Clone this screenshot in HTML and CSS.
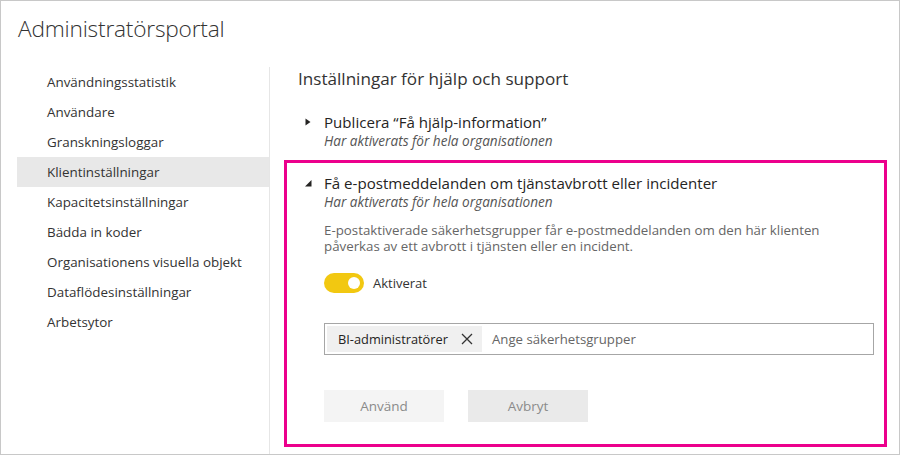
FILE: index.html
```html
<!DOCTYPE html>
<html lang="sv">
<head>
<meta charset="utf-8">
<title>Administratörsportal</title>
<link rel="stylesheet" href="styles.css">
</head>
<body>
<div class="frame">
  <header class="header">
    <h1 class="title">Administratörsportal</h1>
  </header>
  <div class="layout">
    <nav class="sidebar">
      <div class="nav-item">Användningsstatistik</div>
      <div class="nav-item">Användare</div>
      <div class="nav-item">Granskningsloggar</div>
      <div class="nav-item selected">Klientinställningar</div>
      <div class="nav-item">Kapacitetsinställningar</div>
      <div class="nav-item">Bädda in koder</div>
      <div class="nav-item">Organisationens visuella objekt</div>
      <div class="nav-item">Dataflödesinställningar</div>
      <div class="nav-item">Arbetsytor</div>
    </nav>
    <main class="main">
      <h2 class="heading">Inställningar för hjälp och support</h2>
      <section class="setting">
        <div class="setting-head">
          <svg class="caret" width="7" height="8" viewBox="0 0 7 8"><path d="M0.5 0.5 L5.5 4 L0.5 7.5 Z" fill="#252423"/></svg>
          <span class="setting-title">Publicera “Få hjälp-information”</span>
        </div>
        <div class="setting-sub">Har aktiverats för hela organisationen</div>
      </section>
      <section class="setting open">
        <div class="setting-head">
          <svg class="caret" width="7" height="8" viewBox="0 0 7 8"><path d="M6.5 1 L6.5 7.5 L0 7.5 Z" fill="#252423"/></svg>
          <span class="setting-title">Få e-postmeddelanden om tjänstavbrott eller incidenter</span>
        </div>
        <div class="setting-sub">Har aktiverats för hela organisationen</div>
        <div class="setting-body">
          <p class="desc">E-postaktiverade säkerhetsgrupper får e-postmeddelanden om den här klienten påverkas av ett avbrott i tjänsten eller en incident.</p>
          <div class="toggle-row">
            <span class="toggle"><span class="knob"></span></span>
            <span class="toggle-label">Aktiverat</span>
          </div>
          <div class="picker">
            <span class="chip">BI-administratörer
              <svg class="chip-x" width="12" height="12" viewBox="0 0 12 12"><path d="M1 1 L11 11 M11 1 L1 11" stroke="#333" stroke-width="1.3" fill="none"/></svg>
            </span>
            <span class="placeholder">Ange säkerhetsgrupper</span>
          </div>
          <div class="actions">
            <button class="btn apply">Använd</button>
            <button class="btn cancel">Avbryt</button>
          </div>
        </div>
      </section>
    </main>
  </div>
</div>
</body>
</html>
```
FILE: styles.css
```css
* { box-sizing: border-box; }
html, body { margin: 0; padding: 0; background: #fff; }
body { font-family: "Open Sans", "Noto Sans", sans-serif; color: #252423; }

.frame {
  width: 900px;
  height: 455px;
  border: 1px solid #c8c8c8;
  display: flex;
  flex-direction: column;
  overflow: hidden;
}

.header { height: 66px; padding-left: 17px; flex: none; }
.title {
  margin: 0;
  padding-top: 12px;
  font-size: 22.7px;
  font-weight: 300;
  line-height: 32px;
  color: #333;
  letter-spacing: -0.2px;
}

.layout { display: flex; flex: 1; }

.sidebar {
  margin-left: 16px;
  width: 253px;
  border-right: 1px solid #e6e6e6;
  flex: none;
}
.nav-item {
  height: 30px;
  line-height: 30px;
  padding-left: 30px;
  font-size: 13.4px;
  color: #333;
}
.nav-item.selected { background: #e8e8e8; }

.main { padding-left: 14px; flex: 1; }

.heading {
  margin: 1px 0 9px 14px;
  font-size: 17.1px;
  font-weight: 400;
  line-height: 22px;
  color: #333;
}

.setting {
  width: 603px;
  border: 3px solid transparent;
  padding: 9px 0 8px 18px;
}
.setting.open { border-color: #ec008c; padding-bottom: 22px; }

.setting-head { display: flex; align-items: center; height: 22px; }
.caret { flex: none; margin-right: 12px; }
.setting-title { font-size: 15.1px; line-height: 22px; color: #252423; }
.setting-sub {
  padding-left: 19px;
  font-size: 13.6px;
  font-style: italic;
  line-height: 16px;
  color: #555;
}

.setting-body { padding-left: 19px; }
.desc {
  margin: 12px 0 0;
  width: 500px;
  font-size: 13.3px;
  line-height: 16px;
  color: #666;
}

.toggle-row { display: flex; align-items: center; margin-top: 19px; height: 20px; }
.toggle {
  width: 40px;
  height: 20px;
  border-radius: 10px;
  background: #f2c811;
  display: flex;
  align-items: center;
  justify-content: flex-end;
  padding-right: 4px;
}
.knob { width: 12px; height: 12px; border-radius: 50%; background: #fff; }
.toggle-label { margin-left: 9px; font-size: 13px; color: #333; }

.picker {
  margin-top: 30px;
  width: 550px;
  height: 32px;
  border: 1px solid #a6a6a6;
  display: flex;
  align-items: center;
  padding-left: 2px;
}
.chip {
  height: 26px;
  background: #f0f0f0;
  display: flex;
  align-items: center;
  padding: 0 9px 0 11px;
  font-size: 12.8px;
  color: #252423;
}
.chip-x { margin-left: 13px; }
.placeholder { margin-left: 10px; font-size: 13.2px; color: #666; }

.actions { display: flex; gap: 24px; margin-top: 35px; }
.btn {
  width: 120px;
  height: 32px;
  border: none;
  font-family: inherit;
  font-size: 13.5px;
  color: #8a8a8a;
  padding: 0;
}
.btn.apply { background: #f4f4f4; }
.btn.cancel { background: #eaeaea; }
```
